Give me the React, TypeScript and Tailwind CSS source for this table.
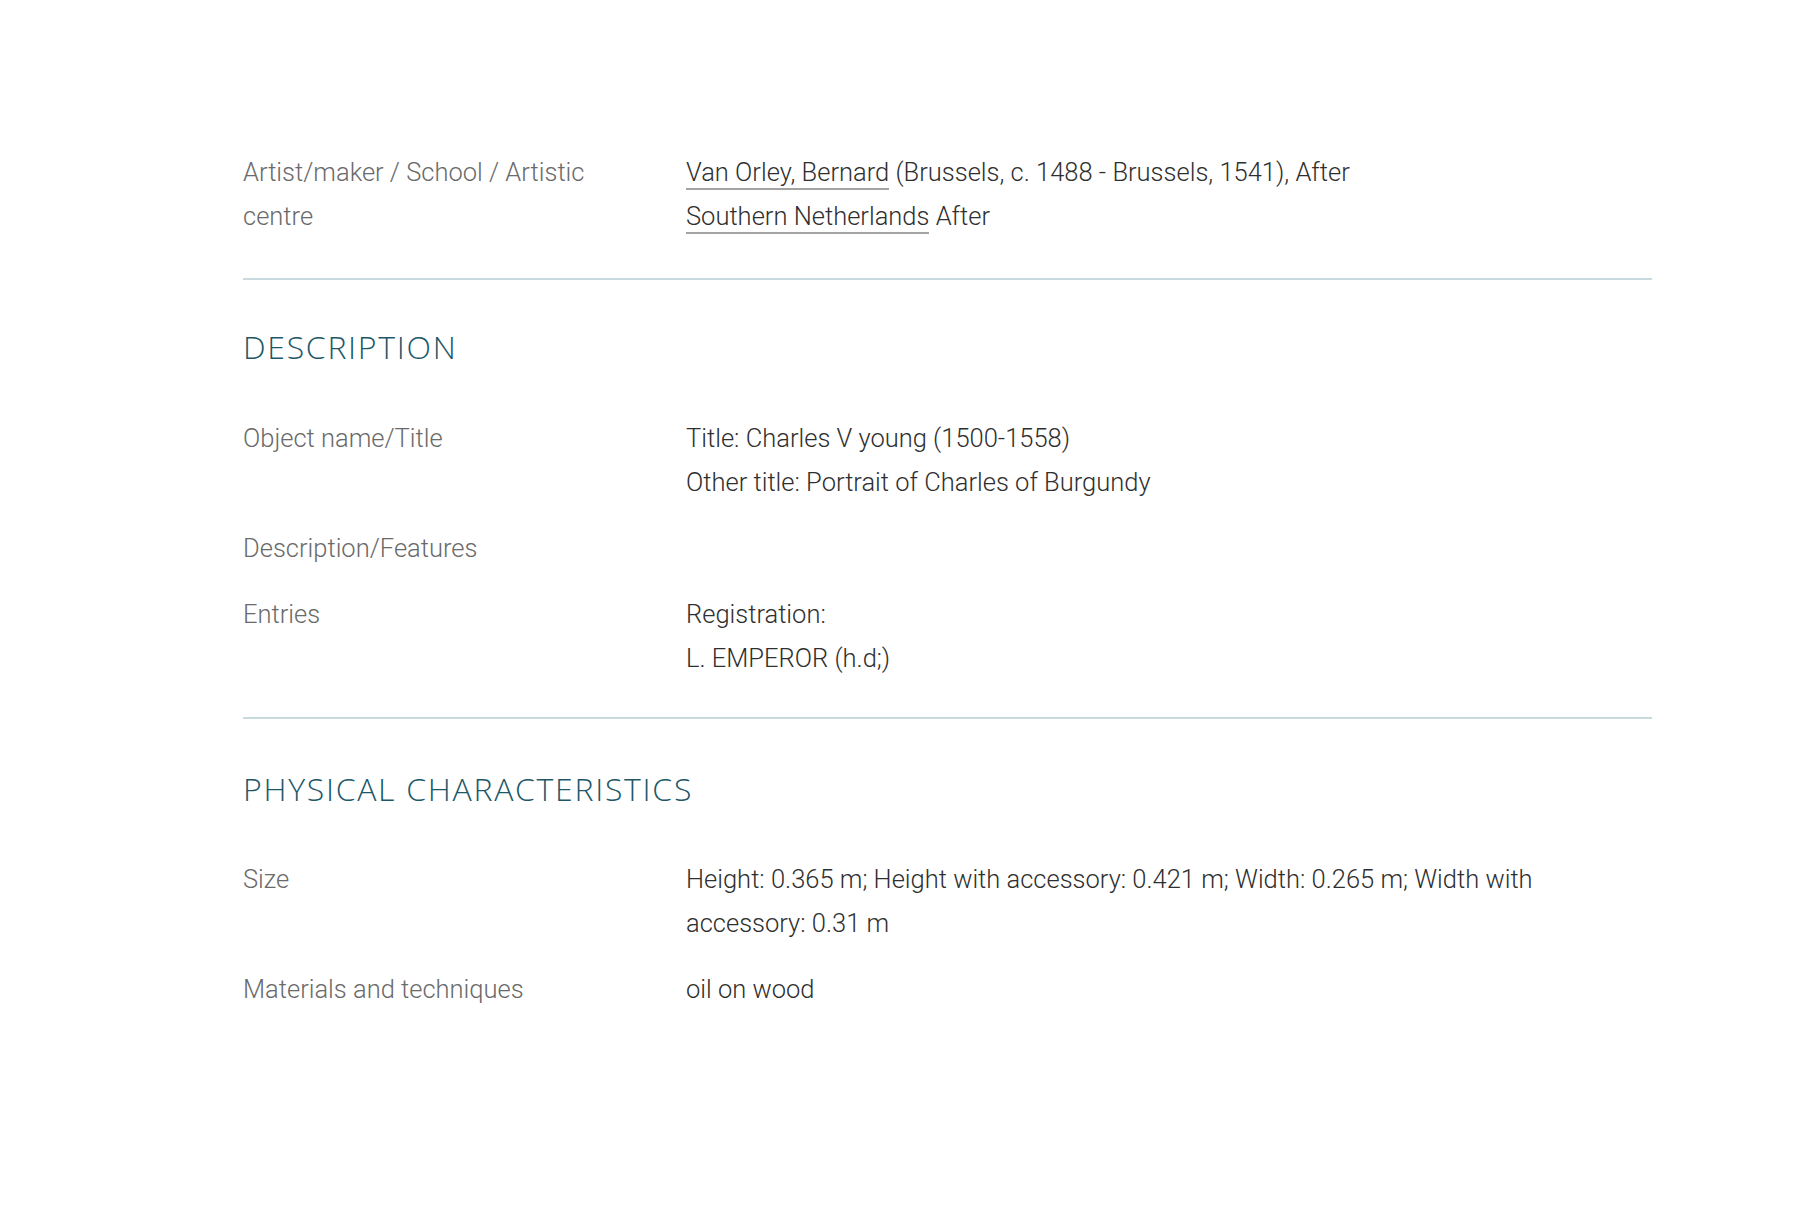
const labelCls = "text-[#6a6a6a]"
const valueCls = "text-[#2f2f2f]"

function Row({ label, children }: { label: React.ReactNode; children: React.ReactNode }) {
	return (
		<div className="grid grid-cols-[443px_1fr]">
			<div className={labelCls + " pr-[40px]"}>{label}</div>
			<div className={valueCls}>{children}</div>
		</div>
	)
}

function Heading({ children }: { children: React.ReactNode }) {
	return (
		<h2 className="font-['Open_Sans',sans-serif] text-[32px] font-light leading-[40px] tracking-[1.7px] text-[#1d5868]">
			{children}
		</h2>
	)
}

function Link({ children }: { children: React.ReactNode }) {
	return <a className="border-b-2 border-[#a3a3a3] pb-[1px]">{children}</a>
}

export default function App() {
	return (
		<div className="min-h-screen bg-white pt-[150px] pl-[243px] font-['Roboto',sans-serif] text-[25.5px] font-light leading-[44px]">
			<div className="w-[1409px]">
				<Row label="Artist/maker / School / Artistic centre">
					<Link>Van Orley, Bernard</Link> (Brussels, c. 1488 - Brussels, 1541), After
					<br />
					<Link>Southern Netherlands</Link> After
				</Row>

				<div className="mt-[40px] h-[2px] bg-[#c8dadf]" />

				<div className="mt-[47px]">
					<Heading>DESCRIPTION</Heading>
				</div>

				<div className="mt-[49px] flex flex-col gap-[22px]">
					<Row label="Object name/Title">
						<div>Title: Charles V young (1500-1558)</div>
						<div>Other title: Portrait of Charles of Burgundy</div>
					</Row>
					<Row label="Description/Features">{""}</Row>
					<Row label="Entries">
						<div>Registration:</div>
						<div>L. EMPEROR (h.d;)</div>
					</Row>
				</div>

				<div className="mt-[37px] h-[2px] bg-[#c8dadf]" />

				<div className="mt-[50px]">
					<Heading>PHYSICAL CHARACTERISTICS</Heading>
				</div>

				<div className="mt-[48px] flex flex-col gap-[22px]">
					<Row label="Size">
						<div className="max-w-[900px]">
							Height: 0.365 m; Height with accessory: 0.421 m; Width: 0.265 m; Width with accessory: 0.31 m
						</div>
					</Row>
					<Row label="Materials and techniques">oil on wood</Row>
				</div>
			</div>
		</div>
	)
}
